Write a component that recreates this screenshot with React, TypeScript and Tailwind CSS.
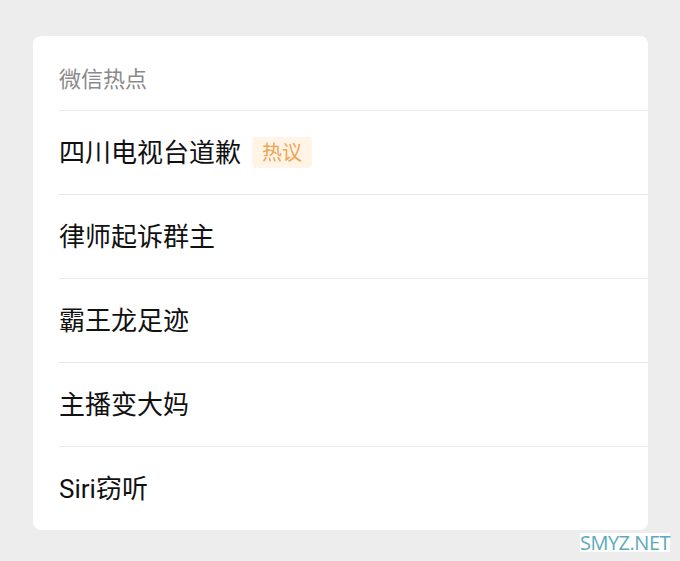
import React from 'react';

const items = [
  { title: '四川电视台道歉', badge: '热议' },
  { title: '律师起诉群主' },
  { title: '霸王龙足迹' },
  { title: '主播变大妈' },
  { title: 'Siri窃听' },
];

export default function App() {
  return (
    <div
      className="relative w-[680px] h-[561px] bg-[#ededed] pt-[36px] pl-[33px]"
      style={{ fontFamily: 'Roboto, "Noto Sans CJK SC", sans-serif' }}
    >
      <div className="w-[615px] h-[494px] bg-white rounded-[8px] pl-[26px] overflow-hidden">
        <div className="h-[74px] flex items-center text-[22px] text-[#8a8a8a] leading-none pt-[13px]">微信热点</div>
        {items.map((it, i) => (
          <div key={i} className="h-[84px] border-t border-[#e9e9e9] flex items-center">
            <span className="text-[26px] text-[#111] leading-none">{it.title}</span>
            {it.badge && (
              <span className="ml-[11px] h-[31px] px-[10px] flex items-center rounded-[4px] bg-[#fff4e6] text-[#f0a452] text-[20px] leading-none">
                {it.badge}
              </span>
            )}
          </div>
        ))}
      </div>
      <div className="absolute left-[580px] top-[533px] w-[90px] h-[19px] bg-white flex items-center justify-center text-[20px] leading-none text-[#5caabb] tracking-[-0.5px]" style={{ fontFamily: '"Open Sans", sans-serif' }}>
        SMYZ.NET
      </div>
    </div>
  );
}
